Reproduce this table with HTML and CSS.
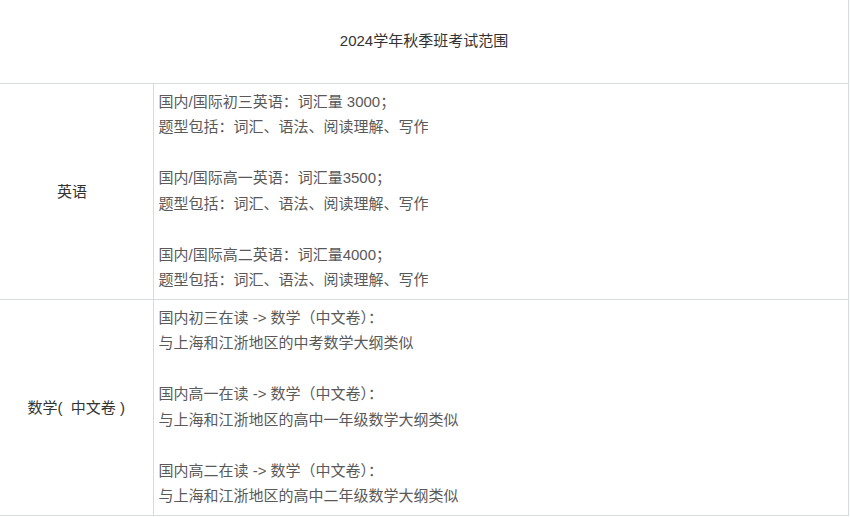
FILE: index.html
```html
<!DOCTYPE html>
<html lang="zh">
<head>
<meta charset="utf-8">
<link rel="stylesheet" href="styles.css">
</head>
<body>
<table class="scope">
  <colgroup>
    <col class="col-subject">
    <col class="col-detail">
  </colgroup>
  <tr>
    <td class="title" colspan="2">2024学年秋季班考试范围</td>
  </tr>
  <tr>
    <td class="subject">英语&nbsp;&nbsp;</td>
    <td class="detail">
      国内/国际初三英语：词汇量 3000；<br>
      题型包括：词汇、语法、阅读理解、写作<br>
      <br>
      国内/国际高一英语：词汇量3500；<br>
      题型包括：词汇、语法、阅读理解、写作<br>
      <br>
      国内/国际高二英语：词汇量4000；<br>
      题型包括：词汇、语法、阅读理解、写作
    </td>
  </tr>
  <tr>
    <td class="subject">数学(&nbsp; 中文卷 )</td>
    <td class="detail">
      国内初三在读 -&gt; 数学（中文卷）：<br>
      与上海和江浙地区的中考数学大纲类似<br>
      <br>
      国内高一在读 -&gt; 数学（中文卷）：<br>
      与上海和江浙地区的高中一年级数学大纲类似<br>
      <br>
      国内高二在读 -&gt; 数学（中文卷）：<br>
      与上海和江浙地区的高中二年级数学大纲类似
    </td>
  </tr>
</table>
</body>
</html>
```

FILE: styles.css
```css
html, body {
  margin: 0;
  padding: 0;
  background: #ffffff;
}

body {
  font-family: "Liberation Sans", "Noto Sans CJK SC", sans-serif;
  font-size: 15px;
  color: #333333;
}

.scope {
  border-collapse: collapse;
  width: 849px;
  table-layout: fixed;
}

.col-subject {
  width: 153px;
}

.scope td {
  border-right: 1px solid #d6dae1;
  border-bottom: 1px solid #d6dae1;
  padding: 0;
}

.title {
  height: 83px;
  text-align: center;
  vertical-align: middle;
  color: #333333;
  padding-bottom: 4px !important;
  box-sizing: border-box;
}

.subject {
  text-align: center;
  vertical-align: middle;
  color: #333333;
  padding-bottom: 2px !important;
}

.detail {
  padding: 5px 6px 6px 5px !important;
  line-height: 25.5px;
  color: #595959;
  vertical-align: top;
}
```
